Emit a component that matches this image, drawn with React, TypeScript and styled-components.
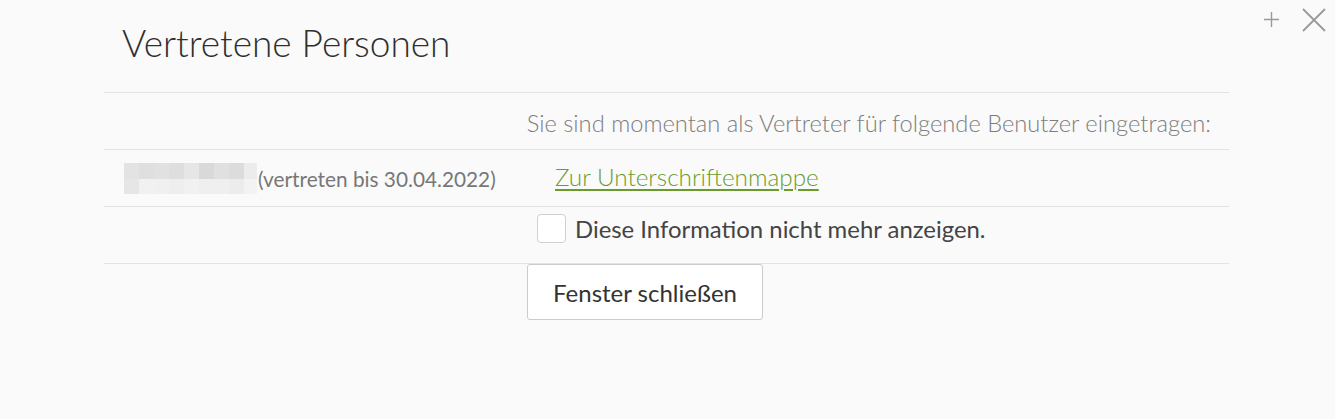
import React from "react";
import styled, { createGlobalStyle } from "styled-components";

const Global = createGlobalStyle`
  html, body { margin: 0; padding: 0; background: #fafafa; }
  body { font-family: Lato, "Open Sans", sans-serif; }
`;

const Page = styled.div`
  position: relative;
  width: 1335px;
  height: 419px;
  background: #fafafa;
`;

const Dialog = styled.div`
  margin-left: 104px;
  width: 1125px;
  display: flex;
  flex-direction: column;
`;

const Header = styled.div`
  height: 93px;
  box-sizing: border-box;
  padding: 21px 0 0 18px;
  border-bottom: 1px solid #e3e3e3;
`;

const Title = styled.h1`
  margin: 0;
  font-family: Lato, sans-serif;
  font-weight: 300;
  font-size: 37px;
  line-height: 44px;
  color: #2f2f2f;
`;

const Row = styled.div<{ $align?: string; $shift?: number }>`
  height: 57px;
  box-sizing: border-box;
  border-bottom: 1px solid #e3e3e3;
  display: flex;
  align-items: center;
  padding-bottom: ${(p) => p.$shift ?? 0}px;
  justify-content: ${(p) => p.$align || "flex-start"};
`;

const Intro = styled.p`
  margin: 4px 18px 0 0;
  font-size: 23.7px;
  font-weight: 300;
  color: #7d7d7d;
`;

const LeftCell = styled.div`
  width: 423px;
  box-sizing: border-box;
  padding-left: 20px;
  display: flex;
  align-items: center;
`;

const RightCell = styled.div<{ $pad?: number }>`
  flex: 1;
  padding-left: ${(p) => p.$pad ?? 0}px;
  display: flex;
  align-items: center;
`;

const Blur = styled.div`
  display: grid;
  grid-template-columns: repeat(9, 15px);
  grid-auto-rows: 15.5px;
  width: 133px;
  overflow: hidden;
  margin-top: 1px;
`;

const Pix = styled.span<{ $c: string }>`
  background: ${(p) => p.$c};
`;

const Until = styled.span`
  font-size: 20.8px;
  color: #777;
  margin-left: 1px;
`;

const Link = styled.a`
  font-size: 24.3px;
  font-weight: 300;
  color: #6a9c2c;
  text-decoration: underline;
  text-underline-offset: 3px;
  text-decoration-thickness: 2px;
  margin-bottom: 3px;
  cursor: pointer;
`;

const Box = styled.span`
  width: 27px;
  height: 27px;
  border: 1px solid #d0d0d0;
  border-radius: 4px;
  background: #fff;
  margin-right: 9px;
`;

const CheckText = styled.span`
  font-size: 23.9px;
  color: #444;
`;

const Button = styled.button`
  margin-left: 423px;
  width: 236px;
  height: 56px;
  align-self: flex-start;
  background: #fff;
  border: 1px solid #cccccc;
  border-radius: 3px;
  font-family: Lato, sans-serif;
  font-size: 24px;
  color: #333;
  padding: 0;
`;

const Tools = styled.div`
  position: absolute;
  top: 8px;
  right: 9px;
  display: flex;
  align-items: flex-start;
  gap: 22px;
`;

const top = ["#e3e3e3", "#dfdfdf", "#e1e1e1", "#dedede", "#e6e6e6", "#d9d9d9", "#e0e0e0", "#dcdcdc", "#ececec"];
const bottom = ["#e6e6e6", "#f1f1f1", "#f0f0f0", "#eeeeee", "#f1f1f1", "#efefef", "#efefef", "#ececec", "#f3f3f3"];

export default function App() {
  return (
    <Page>
      <Global />
      <Tools>
        <svg width="17" height="17" viewBox="0 0 17 17" style={{ marginTop: 3 }}>
          <path d="M8.5 1v15M1 8.5h15" stroke="#9a9a9a" strokeWidth="1.4" />
        </svg>
        <svg width="24" height="24" viewBox="0 0 24 24">
          <path d="M1 1l22 22M23 1L1 23" stroke="#9a9a9a" strokeWidth="1.8" />
        </svg>
      </Tools>
      <Dialog>
        <Header>
          <Title>Vertretene Personen</Title>
        </Header>
        <Row $align="flex-end">
          <Intro>Sie sind momentan als Vertreter für folgende Benutzer eingetragen:</Intro>
        </Row>
        <Row>
          <LeftCell>
            <Blur>
              {top.map((c, i) => (
                <Pix key={"t" + i} $c={c} />
              ))}
              {bottom.map((c, i) => (
                <Pix key={"b" + i} $c={c} />
              ))}
            </Blur>
            <Until>(vertreten bis 30.04.2022)</Until>
          </LeftCell>
          <RightCell $pad={28}>
            <Link>Zur Unterschriftenmappe</Link>
          </RightCell>
        </Row>
        <Row $shift={14}>
          <LeftCell />
          <RightCell $pad={10}>
            <Box />
            <CheckText>Diese Information nicht mehr anzeigen.</CheckText>
          </RightCell>
        </Row>
        <Button>Fenster schließen</Button>
      </Dialog>
    </Page>
  );
}
